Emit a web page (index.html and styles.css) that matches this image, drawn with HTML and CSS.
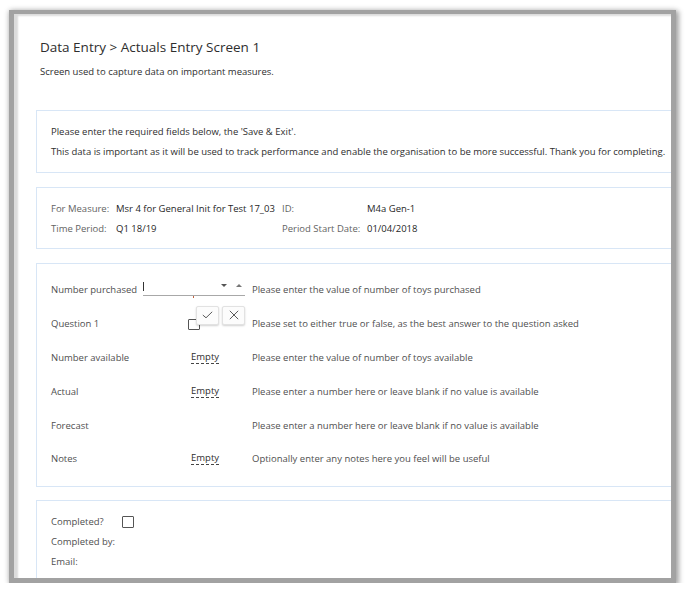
FILE: index.html
```html
<!DOCTYPE html>
<html lang="en">
<head>
<meta charset="utf-8">
<title>Data Entry</title>
<link rel="stylesheet" href="styles.css">
</head>
<body>
<div class="window">
  <h1 class="title">Data Entry &gt; Actuals Entry Screen 1</h1>
  <p class="subtitle">Screen used to capture data on important measures.</p>

  <div class="panel intro">
    <p>Please enter the required fields below, the 'Save &amp; Exit'.</p>
    <p>This data is important as it will be used to track performance and enable the organisation to be more successful. Thank you for completing.</p>
  </div>

  <div class="panel info">
    <span class="lbl">For Measure:</span><span class="val">Msr 4 for General Init for Test 17_03</span><span class="lbl">ID:</span><span class="val">M4a Gen-1</span>
    <span class="lbl">Time Period:</span><span class="val">Q1 18/19</span><span class="lbl">Period Start Date:</span><span class="val">01/04/2018</span>
  </div>

  <div class="panel fields">
    <div class="row">
      <span class="flabel">Number purchased</span>
      <div class="cell">
        <div class="numinput">
          <span class="caret"></span>
          <span class="arrow-down"></span>
          <span class="arrow-up"></span>
          <span class="mark"></span>
        </div>
      </div>
      <span class="desc">Please enter the value of number of toys purchased</span>
    </div>
    <div class="row">
      <span class="flabel">Question 1</span>
      <div class="cell">
        <span class="checkbox q1box"></span>
        <span class="btn btn-ok"><svg width="11" height="8" viewBox="0 0 11 8"><polyline points="0.8,4 4,6.8 10.2,0.8" fill="none" stroke="#5a5a5a" stroke-width="1"/></svg></span>
        <span class="btn btn-cancel"><svg width="10" height="10" viewBox="0 0 10 10"><path d="M0.8 0.8 L9.2 9.2 M9.2 0.8 L0.8 9.2" fill="none" stroke="#5a5a5a" stroke-width="1"/></svg></span>
      </div>
      <span class="desc">Please set to either true or false, as the best answer to the question asked</span>
    </div>
    <div class="row">
      <span class="flabel">Number available</span>
      <div class="cell"><span class="empty">Empty</span></div>
      <span class="desc">Please enter the value of number of toys available</span>
    </div>
    <div class="row">
      <span class="flabel">Actual</span>
      <div class="cell"><span class="empty">Empty</span></div>
      <span class="desc">Please enter a number here or leave blank if no value is available</span>
    </div>
    <div class="row">
      <span class="flabel">Forecast</span>
      <div class="cell"></div>
      <span class="desc">Please enter a number here or leave blank if no value is available</span>
    </div>
    <div class="row">
      <span class="flabel">Notes</span>
      <div class="cell"><span class="empty">Empty</span></div>
      <span class="desc">Optionally enter any notes here you feel will be useful</span>
    </div>
  </div>

  <div class="panel completion">
    <span class="clabel">Completed?</span><span class="cval"><span class="checkbox"></span></span>
    <span class="clabel">Completed by:</span><span class="cval"></span>
    <span class="clabel">Email:</span><span class="cval"></span>
  </div>
</div>
</body>
</html>
```
FILE: styles.css
```css
html, body {
  margin: 0;
  padding: 0;
  background: #ffffff;
}

body {
  font-family: "Open Sans", "DejaVu Sans", sans-serif;
  font-size: 9.5px;
  color: #444;
}

.window {
  box-sizing: border-box;
  width: 667px;
  height: 573px;
  margin: 10px 0 0 9px;
  border-style: solid;
  border-color: #a2a2a2;
  border-width: 4px 5px 5px 5px;
  background: #ffffff;
  box-shadow: inset 5px 3px 2px -1px #dcdcdc, 2px 2px 5px 1px rgba(0, 0, 0, 0.3), 0 0 6px rgba(0, 0, 0, 0.15);
  padding: 24px 0 0 22px;
  overflow: hidden;
}

.title {
  margin: 0 0 0 4px;
  font-size: 13.5px;
  line-height: 18px;
  font-weight: 400;
  color: #2e2e2e;
}

.subtitle {
  margin: 9px 0 0 4px;
  font-size: 9.5px;
  line-height: 14px;
  color: #2e2e2e;
}

.panel {
  width: 700px;
  border: 1px solid #d8e6f6;
  padding: 11px 14px 10px;
  margin-top: 14px;
}

.intro {
  margin-top: 31px;
  color: #2e2e2e;
}

.intro p {
  margin: 0;
  line-height: 20px;
  white-space: nowrap;
}

.info {
  padding-top: 10px;
  display: grid;
  grid-template-columns: 65px 166px 85px 1fr;
  grid-auto-rows: 20px;
  align-items: center;
  white-space: nowrap;
}

.info .lbl {
  color: #636363;
}

.info .val {
  color: #1f1f1f;
}

.fields {
  padding-top: 9px;
  padding-bottom: 10px;
}

.row {
  display: grid;
  grid-template-columns: 92px 109px 1fr;
  height: 33.8px;
  align-items: center;
  white-space: nowrap;
}

.flabel {
  color: #4f4f4f;
}

.desc {
  color: #4f4f4f;
}

.cell {
  position: relative;
  height: 33.8px;
  display: flex;
  align-items: center;
}

.numinput {
  position: absolute;
  left: 0;
  top: 9px;
  width: 102px;
  height: 13px;
  border-bottom: 1px solid #a8a8a8;
}

.caret {
  position: absolute;
  left: 0;
  top: 0;
  width: 1px;
  height: 9px;
  background: #333;
}

.arrow-down {
  position: absolute;
  left: 78px;
  top: 2px;
  width: 0;
  height: 0;
  border-left: 3.5px solid transparent;
  border-right: 3.5px solid transparent;
  border-top: 3px solid #555;
}

.arrow-up {
  position: absolute;
  left: 93px;
  top: 2px;
  width: 0;
  height: 0;
  border-left: 3px solid transparent;
  border-right: 3px solid transparent;
  border-bottom: 3px solid #777;
}

.mark {
  position: absolute;
  left: 50px;
  top: 14px;
  width: 1px;
  height: 2px;
  background: #c0603f;
}

.checkbox {
  display: inline-block;
  box-sizing: border-box;
  width: 11.5px;
  height: 11.5px;
  border: 1.4px solid #555;
  border-radius: 1px;
  background: #fff;
}

.q1box {
  position: absolute;
  left: 45px;
  top: 12px;
}

.btn {
  position: absolute;
  top: -1px;
  box-sizing: border-box;
  width: 23px;
  height: 19px;
  background: #fcfcfc;
  border: 1px solid #e2e2e2;
  border-radius: 2px;
  box-shadow: 0 1px 2px rgba(0, 0, 0, 0.18);
  display: flex;
  align-items: center;
  justify-content: center;
}

.btn svg {
  display: block;
}

.btn-ok {
  left: 53px;
}

.btn-cancel {
  left: 79px;
}

.empty {
  margin-left: 48px;
  color: #2e2e2e;
  line-height: 12px;
  border-bottom: 1px dashed #444;
}

.completion {
  margin-top: 13px;
  padding-top: 11px;
  display: grid;
  grid-template-columns: 71px 1fr;
  grid-auto-rows: 20px;
  align-items: center;
  white-space: nowrap;
}

.clabel {
  color: #4f4f4f;
}

.cval {
  display: flex;
  align-items: center;
}
```
